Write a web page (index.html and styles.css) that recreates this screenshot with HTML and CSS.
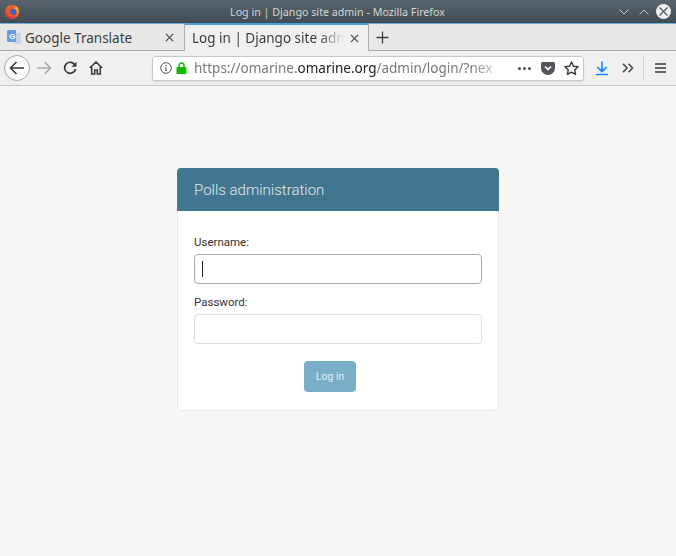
FILE: index.html
```html
<!DOCTYPE html>
<html lang="en">
<head>
<meta charset="utf-8">
<title>Log in | Django site admin</title>
<link rel="stylesheet" href="styles.css">
</head>
<body>
<header class="titlebar">
  <svg class="ff-logo" width="16" height="17" viewBox="0 0 18 18"><defs><linearGradient id="ffg" x1="0.8" y1="0" x2="0.2" y2="1"><stop offset="0" stop-color="#ffcb2e"/><stop offset="0.5" stop-color="#f2602b"/><stop offset="1" stop-color="#d92545"/></linearGradient></defs><circle cx="9" cy="9.600" r="8" fill="url(#ffg)"/><circle cx="10" cy="9.500" r="4" fill="#3a62c9"/><path d="M6 2.500 C9 1 13 2 15 5 C12.500 3.800 11 4.500 10 6 C8 6 6.500 7.500 7 9.500 C7.500 12 10 13.500 12.500 12.500 C11 15 7 15.500 4.500 13 C2.500 11 2.500 7.500 4.500 5.500 C5 4.500 5.500 3.500 6 2.500Z" fill="#ee5a24"/><path d="M13 2.400 C15.600 4 17 7 16.400 10 C15.800 7.500 14.500 6 13 5.500Z" fill="#ffb52b"/></svg>
  <div class="win-title">Log in | Django site admin - Mozilla Firefox</div>
  <div class="win-buttons">
    <svg width="10" height="6" viewBox="0 0 10 6"><path d="M.5.5 5 5 9.500.5" fill="none" stroke="#c4c9cc" stroke-width="1"/></svg>
    <svg width="10" height="6" viewBox="0 0 10 6"><path d="M.5 5.500 5 1 9.500 5.500" fill="none" stroke="#c4c9cc" stroke-width="1"/></svg>
    <span class="win-close"><svg width="15" height="15" viewBox="0 0 15 15"><circle cx="7.500" cy="7.500" r="7.500" fill="#eff0f1"/><path d="M3.500 3.500l8 8M11.500 3.500l-8 8" stroke="#4d5960" stroke-width="1.300"/></svg></span>
  </div>
</header>

<nav class="tabbar">
  <div class="tab tab-idle">
    <svg class="favicon" width="14" height="15" viewBox="0 0 14 15"><path d="M6 3h7a1 1 0 0 1 1 1v9a1 1 0 0 1-1 1H8z" fill="#c9d2de"/><rect x="0" y="0" width="9" height="12" rx="1" fill="#6a9cec"/><text x="2.200" y="9" class="favicon-g">G</text></svg>
    <span class="tab-label">Google Translate</span>
    <svg class="tab-x" width="9" height="9" viewBox="0 0 10 10"><path d="M1 1l8 8M9 1l-8 8" stroke="#4a4a4f" stroke-width="1.400"/></svg>
  </div>
  <div class="tab tab-active">
    <span class="tab-label tab-fade">Log in | Django site admin</span>
    <svg class="tab-x" width="9" height="9" viewBox="0 0 10 10"><path d="M1 1l8 8M9 1l-8 8" stroke="#4a4a4f" stroke-width="1.400"/></svg>
  </div>
  <div class="tab-new"><svg width="13" height="13" viewBox="0 0 13 13"><path d="M6.500.5v12M.5 6.500h12" stroke="#3c3c40" stroke-width="1.300"/></svg></div>
  <div class="tab-rest"></div>
</nav>

<div class="toolbar">
  <button class="btn-back" type="button" aria-label="Back"><svg width="16" height="14" viewBox="0 0 16 14"><path d="M15 7H2M7.500 1 1.500 7l6 6" fill="none" stroke="#38383d" stroke-width="1.600"/></svg></button>
  <svg class="tb-forward" width="16" height="14" viewBox="0 0 16 14"><path d="M1 7h13M8.500 1l6 6-6 6" fill="none" stroke="#a9a9ab" stroke-width="1.600"/></svg>
  <svg class="tb-reload" width="14" height="14" viewBox="0 0 14 14"><path d="M12 4.200A5.500 5.500 0 1 0 12.500 8" fill="none" stroke="#38383d" stroke-width="1.700"/><path d="M13.500 .8v5h-5z" fill="#38383d"/></svg>
  <svg class="tb-home" width="14" height="14" viewBox="0 0 14 14"><path d="M.8 7 7 1l6.200 6M2.700 5.800V13h3V9h2.600v4h3V5.800" fill="none" stroke="#38383d" stroke-width="1.500"/></svg>
  <div class="urlbar">
    <svg class="info" width="12" height="12" viewBox="0 0 12 12"><circle cx="6" cy="6" r="5.300" fill="none" stroke="#55555a" stroke-width="1"/><path d="M6 5.200v3.800M6 3v1.300" stroke="#55555a" stroke-width="1.200"/></svg>
    <svg class="lock" width="11" height="12" viewBox="0 0 11 12"><path d="M3 5.500V3.500a2.500 2.500 0 0 1 5 0v2" fill="none" stroke="#12bc00" stroke-width="1.500"/><rect x="0.500" y="5" width="10" height="7" rx="1" fill="#12bc00"/></svg>
    <div class="url"><span class="url-dim">https://omarine.</span><span class="url-host">omarine.org</span><span class="url-dim">/admin/login/?nex</span></div>
    <div class="url-dots"><i></i><i></i><i></i></div>
    <svg class="pocket" width="14" height="13" viewBox="0 0 14 13"><path d="M1.500 0h11A1.500 1.500 0 0 1 14 1.500V6a7 7 0 0 1-14 0V1.500A1.500 1.500 0 0 1 1.500 0z" fill="#55555a"/><path d="M4 4.500l3 3 3-3" fill="none" stroke="#fff" stroke-width="1.700"/></svg>
    <svg class="star" width="15" height="14" viewBox="0 0 15 14"><path d="M7.500 1l2 4.200 4.600.6-3.400 3.100.9 4.500-4.100-2.300-4.100 2.300.9-4.500L.9 5.800l4.600-.6z" fill="none" stroke="#38383d" stroke-width="1.400" stroke-linejoin="round"/></svg>
  </div>
  <svg class="tb-dl" width="12" height="15" viewBox="0 0 13 15"><path d="M6.500 0v10M1.500 5.800l5 5 5-5" fill="none" stroke="#0a84ff" stroke-width="1.700"/><path d="M0 14h13" stroke="#0a84ff" stroke-width="1.500"/></svg>
  <svg class="tb-more" width="12" height="10" viewBox="0 0 12 10"><path d="M1 .8 5 5 1 9.200M6.500.8l4 4.200-4 4.200" fill="none" stroke="#4a4a4f" stroke-width="1.600"/></svg>
  <span class="tb-sep"></span>
  <svg class="tb-menu" width="11" height="10" viewBox="0 0 11 10"><path d="M0 1h11M0 5h11M0 9h11" stroke="#38383d" stroke-width="1.500"/></svg>
</div>

<main class="page">
  <section class="card">
    <h1 class="card-head">Polls administration</h1>
    <form class="card-body">
      <div class="field">
        <label class="field-label" for="u">Username:</label>
        <div class="input input-focus" id="u"><span class="caret"></span></div>
      </div>
      <div class="field">
        <label class="field-label" for="p">Password:</label>
        <div class="input" id="p"></div>
      </div>
      <div class="actions"><button class="login" type="button">Log in</button></div>
    </form>
  </section>
</main>
</body>
</html>
```
FILE: styles.css
```css
* { box-sizing: border-box; }
html, body { margin: 0; height: 100%; }
body {
  width: 676px;
  height: 556px;
  overflow: hidden;
  background: #f8f8f8;
  display: flex;
  flex-direction: column;
  font-family: "Noto Sans", sans-serif;
}
svg { display: block; flex: none; }

.titlebar {
  height: 23px;
  flex: none;
  display: flex;
  align-items: center;
  background: linear-gradient(#59646c, #414c54);
  padding: 0 5px 0 4px;
}
.ff-logo { margin-top: -1px; }
.win-title {
  flex: 1;
  text-align: center;
  color: #d3d6d8;
  font-size: 10.7px;
  padding-left: 36px;
  white-space: nowrap;
}
.win-buttons { display: flex; align-items: center; gap: 10px; }
.win-close { margin-left: -3px; }

.tabbar {
  height: 28px;
  flex: none;
  display: flex;
  background: #e8e8e7;
}
.tab {
  display: flex;
  align-items: center;
  font-size: 13.5px;
  color: #3c3c40;
  white-space: nowrap;
}
.tab-idle {
  width: 185px;
  padding: 1px 10px 0 7px;
  border-top: 1px solid #6fb0e0;
  border-right: 1px solid #b0b0b0;
  border-bottom: 1px solid #aaa;
}
.tab-active {
  width: 184px;
  padding: 0 9px 0 7px;
  border-top: 2px solid #4a9fe0;
  border-right: 1px solid #b0b0b0;
  background: #f0f0ef;
}
.favicon { margin-right: 4px; }
.favicon-g { font: bold 8px "Liberation Sans", sans-serif; fill: #fff; }
.tab-label { flex: 1; overflow: hidden; }
.tab-fade {
  -webkit-mask-image: linear-gradient(to right, #000 84%, transparent 100%);
  mask-image: linear-gradient(to right, #000 84%, transparent 100%);
}
.tab-x { margin-left: 6px; }
.tab-new {
  width: 26px;
  display: flex;
  align-items: center;
  justify-content: center;
  border-top: 1px solid #6fb0e0;
  border-bottom: 1px solid #aaa;
}
.tab-rest {
  flex: 1;
  border-top: 1px solid #6fb0e0;
  border-bottom: 1px solid #aaa;
}

.toolbar {
  height: 35px;
  flex: none;
  display: flex;
  align-items: center;
  background: #f0f0ef;
  border-bottom: 1px solid #c4c4c4;
  padding-left: 4px;
}
.btn-back {
  width: 26px;
  height: 26px;
  padding: 0;
  border-radius: 50%;
  border: 1px solid #a8a8a8;
  background: #fbfbfb;
  display: flex;
  align-items: center;
  justify-content: center;
}
.tb-forward { margin-left: 6px; }
.tb-reload { margin-left: 11px; }
.tb-home { margin-left: 12px; }
.urlbar {
  width: 432px;
  height: 25px;
  margin-left: 49px;
  display: flex;
  align-items: center;
  background: #fff;
  border: 1px solid #c8c8c8;
  border-radius: 3px;
  padding: 0 4px 0 7px;
  box-shadow: 0 1px 2px rgba(0,0,0,.08);
}
.info { margin-right: 4px; }
.lock { margin-right: 7px; }
.url {
  width: 316px;
  overflow: hidden;
  white-space: nowrap;
  font-size: 13.5px;
  -webkit-mask-image: linear-gradient(to right, #000 88%, transparent 99%);
  mask-image: linear-gradient(to right, #000 88%, transparent 99%);
}
.url-dim { color: #77777c; }
.url-host { color: #202024; }
.url-dots { display: flex; gap: 2px; margin-left: 9px; }
.url-dots i { width: 3px; height: 3px; border-radius: 50%; background: #4a4a4f; }
.pocket { margin-left: 10px; }
.star { margin-left: 9px; }
.tb-dl { margin-left: 12px; }
.tb-more { margin-left: 14px; }
.tb-sep { width: 1px; height: 24px; background: #cfcfcf; margin-left: 9px; }
.tb-menu { margin-left: 11px; }

.page { flex: 1; padding-top: 82px; }
.card {
  width: 322px;
  height: 243px;
  margin: 0 auto;
  background: #fff;
  border: 1px solid #eaeaea;
  border-radius: 4px;
}
.card-head {
  margin: -1px -1px 0;
  height: 43px;
  padding: 1px 16px 0 17px;
  display: flex;
  align-items: center;
  background: #417690;
  border-radius: 4px 4px 0 0;
  color: #e2e9ed;
  font: 300 15px Roboto, sans-serif;
}
.card-body { padding: 24px 16px 0; font-family: Roboto, sans-serif; }
.field { margin-bottom: 11px; }
.field-label {
  display: block;
  font-size: 11.5px;
  line-height: 14px;
  color: #333;
  margin-bottom: 5px;
}
.input {
  height: 30px;
  background: #fff;
  border: 1px solid #dedede;
  border-radius: 4px;
  display: flex;
  align-items: center;
  padding-left: 7px;
}
.input-focus { border-color: #a9a9a9; }
.caret { width: 1px; height: 16px; background: #222; }
.actions { display: flex; justify-content: center; padding: 6px 16px 0 0; }
.login {
  width: 52px;
  height: 31px;
  border: 0;
  border-radius: 4px;
  background: #79aec8;
  color: #e4eff4;
  font: 400 10.5px Roboto, sans-serif;
  padding: 0;
}
```
